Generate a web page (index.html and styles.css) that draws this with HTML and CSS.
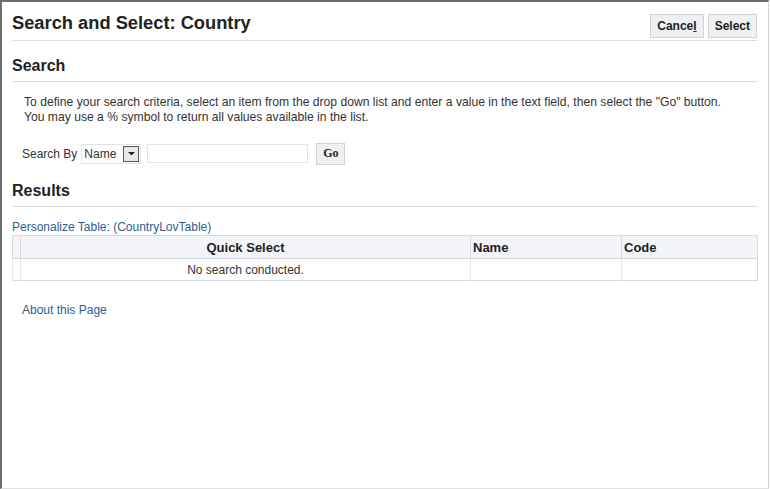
FILE: index.html
```html
<!DOCTYPE html>
<html>
<head>
<meta charset="utf-8">
<link rel="stylesheet" href="styles.css">
</head>
<body>
<div class="frame">
  <div class="page">
    <div class="title-row">
      <h1 class="title">Search and Select: Country</h1>
      <div class="buttons">
        <button class="btn">Cance<u>l</u></button>
        <button class="btn">Select</button>
      </div>
    </div>
    <h2 class="section">Search</h2>
    <p class="instructions">To define your search criteria, select an item from the drop down list and enter a value in the text field, then select the "Go" button.<br>You may use a % symbol to return all values available in the list.</p>
    <div class="search-row">
      <span class="label">Search By</span>
      <div class="select"><span class="select-text">Name</span><span class="select-arrow"><svg width="9" height="5" viewBox="0 0 9 5"><path d="M1 1h7L4.5 4.5z" fill="#222"/></svg></span></div>
      <div class="textfield"></div>
      <button class="go">Go</button>
    </div>
    <h2 class="section results">Results</h2>
    <a class="link personalize">Personalize Table: (CountryLovTable)</a>
    <table class="grid">
      <thead>
        <tr>
          <th class="c0"></th>
          <th class="c1 center">Quick Select</th>
          <th class="c2">Name</th>
          <th class="c3">Code</th>
        </tr>
      </thead>
      <tbody>
        <tr>
          <td class="c0"></td>
          <td class="c1 center">No search conducted.</td>
          <td class="c2"></td>
          <td class="c3"></td>
        </tr>
      </tbody>
    </table>
    <a class="link about">About this Page</a>
  </div>
</div>
</body>
</html>
```
FILE: styles.css
```css
html, body {
  margin: 0;
  padding: 0;
  background: #fff;
}
body {
  font-family: "Liberation Sans", Arial, sans-serif;
  color: #333;
}
.frame {
  width: 766px;
  height: 486px;
  border-top: 2px solid #6e6e6e;
  border-left: 2px solid #6e6e6e;
  border-right: 1px solid #d4d4d4;
  border-bottom: 1px solid #e0e0e0;
}
.page {
  padding: 0 11px 0 10px;
}
.title-row {
  display: flex;
  justify-content: space-between;
  align-items: flex-start;
  border-bottom: 1px solid #dcdcdc;
  height: 38px;
}
.title {
  margin: 0;
  padding-top: 10px;
  font-size: 18.3px;
  line-height: 22px;
  font-weight: bold;
  color: #222;
}
.buttons {
  display: flex;
  gap: 4px;
  padding-top: 12px;
}
.btn {
  height: 24px;
  padding: 0 6px;
  font-family: "Liberation Sans", Arial, sans-serif;
  font-size: 12px;
  font-weight: bold;
  color: #222;
  background: #eef0f2;
  border: 1px solid #cfd3d8;
  border-radius: 0;
}
.btn u { text-decoration: underline; }
.section {
  margin: 0;
  font-size: 16px;
  font-weight: bold;
  color: #222;
  line-height: 20px;
  padding-top: 15px;
  padding-bottom: 5px;
  border-bottom: 1px solid #dcdcdc;
}
.instructions {
  margin: 0;
  padding: 13px 0 0 12px;
  font-size: 12.15px;
  line-height: 15px;
  color: #333;
}
.search-row {
  display: flex;
  align-items: center;
  padding: 18px 0 0 10px;
  height: 21px;
}
.label {
  font-size: 12px;
  color: #333;
  margin-right: 4px;
}
.select {
  display: flex;
  align-items: center;
  height: 20px;
  box-sizing: border-box;
  border: 1px solid #e2e4e6;
  padding-left: 2px;
  width: 60px;
}
.select-text {
  font-size: 12px;
  color: #333;
  flex: 1;
}
.select-arrow {
  width: 16px;
  height: 16px;
  box-sizing: border-box;
  border: 1px solid #555;
  background: #e8e8e8;
  display: flex;
  align-items: center;
  justify-content: center;
  margin-right: 1px;
}
.textfield {
  width: 161px;
  height: 19px;
  box-sizing: border-box;
  border: 1px solid #e2e4e6;
  margin-left: 6px;
}
.go {
  margin-left: 8px;
  height: 22px;
  width: 29px;
  padding: 0;
  font-family: "Liberation Serif", "Times New Roman", serif;
  font-weight: bold;
  font-size: 12px;
  color: #222;
  background: #eef0f2;
  border: 1px solid #cfd3d8;
  border-radius: 0;
}
.results {
  padding-top: 17px;
}
.link {
  display: block;
  font-size: 12px;
  color: #2f5e91;
  text-decoration: none;
}
.personalize {
  padding-top: 13px;
  line-height: 15px;
}
.grid {
  width: 746px;
  border-collapse: collapse;
  border: 1px solid #d6d9de;
  font-size: 12px;
  margin-top: 0;
}
.grid th {
  height: 22px;
  background: #f2f4f7;
  font-size: 13px;
  font-weight: bold;
  color: #222;
  text-align: left;
  border: 1px solid #d6d9de;
  padding: 0 2px;
}
.grid td {
  height: 21px;
  border-left: 1px solid #e6e8eb;
  padding: 0 2px;
  color: #333;
}
.grid .center { text-align: center; }
.grid .c0 { width: 3px; padding: 0 2px; }
.grid .c1 { width: 445px; }
.grid .c2 { width: 146px; }
.about {
  padding: 22px 0 0 10px;
}
```
